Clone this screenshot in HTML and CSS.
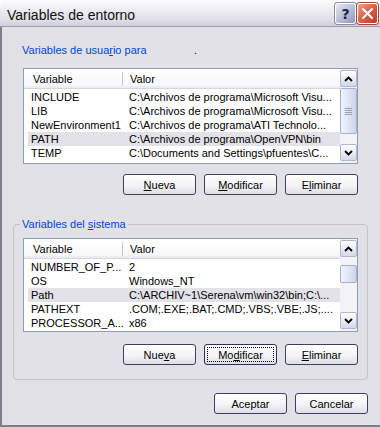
FILE: index.html
```html
<!DOCTYPE html>
<html lang="es">
<head>
<meta charset="utf-8">
<title>Variables de entorno</title>
<link rel="stylesheet" href="styles.css">
</head>
<body>
<div class="window">
  <div class="titlebar">
    <span class="title">Variables de entorno</span>
    <div class="tb-buttons">
      <div class="tb-btn tb-help">?</div>
      <div class="tb-btn tb-close">
        <svg width="13" height="13" viewBox="0 0 13 13"><path d="M2 2 L11 11 M11 2 L2 11" stroke="#fff" stroke-width="2" stroke-linecap="round"/></svg>
      </div>
    </div>
  </div>
  <div class="body">
    <div class="group-plain">
      <div class="group-label"><span class="group-label-text">Variables de usua<u>r</u>io para</span><span class="dot">.</span></div>
      <div class="listview lv-user">
        <div class="lv-main">
          <div class="lv-header">
            <div class="lv-h1">Variable</div>
            <div class="lv-sep"></div>
            <div class="lv-h2">Valor</div>
          </div>
          <div class="lv-rows">
            <div class="lv-row"><div class="c1">INCLUDE</div><div class="c2">C:\Archivos de programa\Microsoft Visu...</div></div>
            <div class="lv-row"><div class="c1">LIB</div><div class="c2">C:\Archivos de programa\Microsoft Visu...</div></div>
            <div class="lv-row"><div class="c1">NewEnvironment1</div><div class="c2">C:\Archivos de programa\ATI Technolo...</div></div>
            <div class="lv-row sel"><div class="c1">PATH</div><div class="c2">C:\Archivos de programa\OpenVPN\bin</div></div>
            <div class="lv-row"><div class="c1">TEMP</div><div class="c2">C:\Documents and Settings\pfuentes\C...</div></div>
          </div>
        </div>
        <div class="lv-scroll">
          <div class="sb-btn"><svg width="9" height="6" viewBox="0 0 9 6"><path d="M1 5 L4.5 1.5 L8 5" fill="none" stroke="#000" stroke-width="1.8"/></svg></div>
          <div class="sb-thumb thumb-user"><span class="grip"></span></div>
          <div class="sb-track"></div>
          <div class="sb-btn"><svg width="9" height="6" viewBox="0 0 9 6"><path d="M1 1 L4.5 4.5 L8 1" fill="none" stroke="#000" stroke-width="1.8"/></svg></div>
        </div>
      </div>
      <div class="btn-row">
        <div class="btn"><u>N</u>ueva</div>
        <div class="btn"><u>M</u>odificar</div>
        <div class="btn">E<u>l</u>iminar</div>
      </div>
    </div>

    <fieldset class="group-frame">
      <legend>Variables del <u>s</u>istema</legend>
      <div class="listview lv-sys">
        <div class="lv-main">
          <div class="lv-header">
            <div class="lv-h1">Variable</div>
            <div class="lv-sep"></div>
            <div class="lv-h2">Valor</div>
          </div>
          <div class="lv-rows">
            <div class="lv-row"><div class="c1">NUMBER_OF_P...</div><div class="c2">2</div></div>
            <div class="lv-row"><div class="c1">OS</div><div class="c2">Windows_NT</div></div>
            <div class="lv-row sel"><div class="c1">Path</div><div class="c2">C:\ARCHIV~1\Serena\vm\win32\bin;C:\...</div></div>
            <div class="lv-row"><div class="c1">PATHEXT</div><div class="c2">.COM;.EXE;.BAT;.CMD;.VBS;.VBE;.JS;....</div></div>
            <div class="lv-row"><div class="c1">PROCESSOR_A...</div><div class="c2">x86</div></div>
          </div>
        </div>
        <div class="lv-scroll">
          <div class="sb-btn"><svg width="9" height="6" viewBox="0 0 9 6"><path d="M1 5 L4.5 1.5 L8 5" fill="none" stroke="#000" stroke-width="1.8"/></svg></div>
          <div class="sb-thumb thumb-sys"></div>
          <div class="sb-track"></div>
          <div class="sb-btn"><svg width="9" height="6" viewBox="0 0 9 6"><path d="M1 1 L4.5 4.5 L8 1" fill="none" stroke="#000" stroke-width="1.8"/></svg></div>
        </div>
      </div>
      <div class="btn-row btn-row-sys">
        <div class="btn">Nue<u>v</u>a</div>
        <div class="btn focused">Mo<u>d</u>ificar</div>
        <div class="btn"><u>E</u>liminar</div>
      </div>
    </fieldset>

    <div class="dialog-buttons">
      <div class="btn">Aceptar</div>
      <div class="btn">Cancelar</div>
    </div>
  </div>
</div>
</body>
</html>
```

FILE: styles.css
```css
html, body {
  margin: 0;
  padding: 0;
  background: #ffffff;
}

.window {
  width: 380px;
  height: 427px;
  display: flex;
  flex-direction: column;
  font-family: "Liberation Sans", Arial, sans-serif;
  font-size: 11px;
  color: #000;
  overflow: hidden;
}

.titlebar {
  height: 27px;
  box-sizing: border-box;
  display: flex;
  align-items: center;
  padding: 0 2px 0 7px;
  background: linear-gradient(#fdfdfe 0%, #eeeef3 35%, #e0e0e8 75%, #cfcfda 100%);
  border-bottom: 1px solid #9c9cac;
  border-top-left-radius: 7px;
  border-top-right-radius: 7px;
}

.title {
  font-size: 14px;
  color: #111;
  padding-top: 3px;
}

.tb-buttons {
  margin-left: auto;
  display: flex;
  gap: 1px;
  padding-top: 1px;
}

.tb-btn {
  width: 21px;
  height: 21px;
  box-sizing: border-box;
  border: 1px solid #ffffff;
  border-radius: 3px;
  display: flex;
  align-items: center;
  justify-content: center;
  box-shadow: 0 0 0 1px #8a8aa0;
}

.tb-help {
  background: linear-gradient(135deg, #e4e6f2 0%, #b8bdd6 55%, #8e95b6 100%);
  color: #1a2050;
  font-weight: bold;
  font-size: 14px;
  font-family: "DejaVu Sans", sans-serif;
}

.tb-close {
  background: linear-gradient(135deg, #f0a090 0%, #d8604c 50%, #b83a28 100%);
  box-shadow: 0 0 0 1px #a04838;
}

.body {
  flex: 1;
  background: #e2e1e7;
  border-left: 2px solid #7e7e8c;
  border-bottom: 2px solid #7e7e8c;
  padding: 0 12px 0 11px;
}

.group-plain {
  padding: 17px 10px 0 10px;
}

.group-label {
  height: 13px;
  line-height: 13px;
  margin-left: -1px;
  color: #0046d5;
  white-space: nowrap;
}

.group-label-text {
  display: inline-block;
  width: 172px;
}

.dot {
  color: #000;
}

.listview {
  margin-top: 11px;
  height: 96px;
  box-sizing: border-box;
  border: 1px solid #8f9db5;
  background: #ffffff;
  display: flex;
}

.lv-main {
  flex: 1;
  min-width: 0;
}

.lv-header {
  height: 20px;
  box-sizing: border-box;
  display: flex;
  align-items: center;
  background: linear-gradient(#ffffff, #f7f7f9);
  border-bottom: 1px solid #d6d6de;
  box-shadow: inset 0 -2px 0 #ececf1;
}

.lv-h1 {
  width: 98px;
  box-sizing: border-box;
  padding-left: 9px;
}

.lv-sep {
  width: 1px;
  height: 14px;
  background: #c6c6d0;
  box-shadow: 1px 0 0 #ffffff;
}

.lv-h2 {
  padding-left: 7px;
}

.lv-rows {
  padding-top: 1px;
}

.lv-row {
  height: 14px;
  line-height: 14px;
  margin-left: 4px;
  display: flex;
  white-space: nowrap;
}

.lv-row.sel {
  background: #e3e2e8;
}

.c1 {
  width: 101px;
  flex: none;
  box-sizing: border-box;
  padding-left: 3px;
  overflow: hidden;
}

.c2 {
  flex: 1;
  min-width: 0;
  overflow: hidden;
}

.lv-scroll {
  width: 17px;
  flex: none;
  display: flex;
  flex-direction: column;
  padding: 1px 0 2px;
  box-sizing: border-box;
  background: #f3f3f7;
}

.sb-btn {
  height: 17px;
  box-sizing: border-box;
  border: 1px solid #b2b6ca;
  border-radius: 2px;
  background: linear-gradient(#ffffff, #e6e8f2 60%, #d4d8e8);
  display: flex;
  align-items: center;
  justify-content: center;
}

.sb-thumb {
  box-sizing: border-box;
  border: 1px solid #aab0c8;
  border-radius: 2px;
  background: linear-gradient(90deg, #f2f4fc, #dde2f2 60%, #cfd5ea);
  display: flex;
  align-items: center;
  justify-content: center;
}

.thumb-user {
  margin-top: 1px;
  height: 46px;
}

.thumb-sys {
  margin-top: 8px;
  height: 18px;
}

.grip {
  width: 7px;
  height: 7px;
  background: repeating-linear-gradient(#9aa0b8 0 1px, transparent 1px 2px);
}

.sb-track {
  flex: 1;
}

.btn-row {
  margin-top: 10px;
  display: flex;
  justify-content: flex-end;
  gap: 8px;
}

.btn {
  width: 73px;
  height: 21px;
  box-sizing: border-box;
  border: 1px solid #3e4060;
  border-radius: 3px;
  background: linear-gradient(#ffffff 0%, #f4f4f7 55%, #dedee6 100%);
  display: flex;
  align-items: center;
  justify-content: center;
  color: #000;
}

.btn.focused {
  outline: 1px dotted #000;
  outline-offset: -4px;
  border-color: #2c3060;
}

.group-frame {
  margin: 23px 0 0 0;
  padding: 7px 9px 14px;
  border: 1px solid #c2c2cc;
  border-radius: 4px;
  min-width: 0;
}

.group-frame legend {
  padding: 0 2px;
  margin-left: -3px;
  color: #0046d5;
  line-height: 13px;
  font-size: 11px;
}

.lv-sys {
  margin-top: 0;
  height: 94px;
}

.btn-row-sys {
  margin-top: 12px;
}

.dialog-buttons {
  margin-top: 13px;
  display: flex;
  justify-content: flex-end;
  gap: 8px;
}
```
